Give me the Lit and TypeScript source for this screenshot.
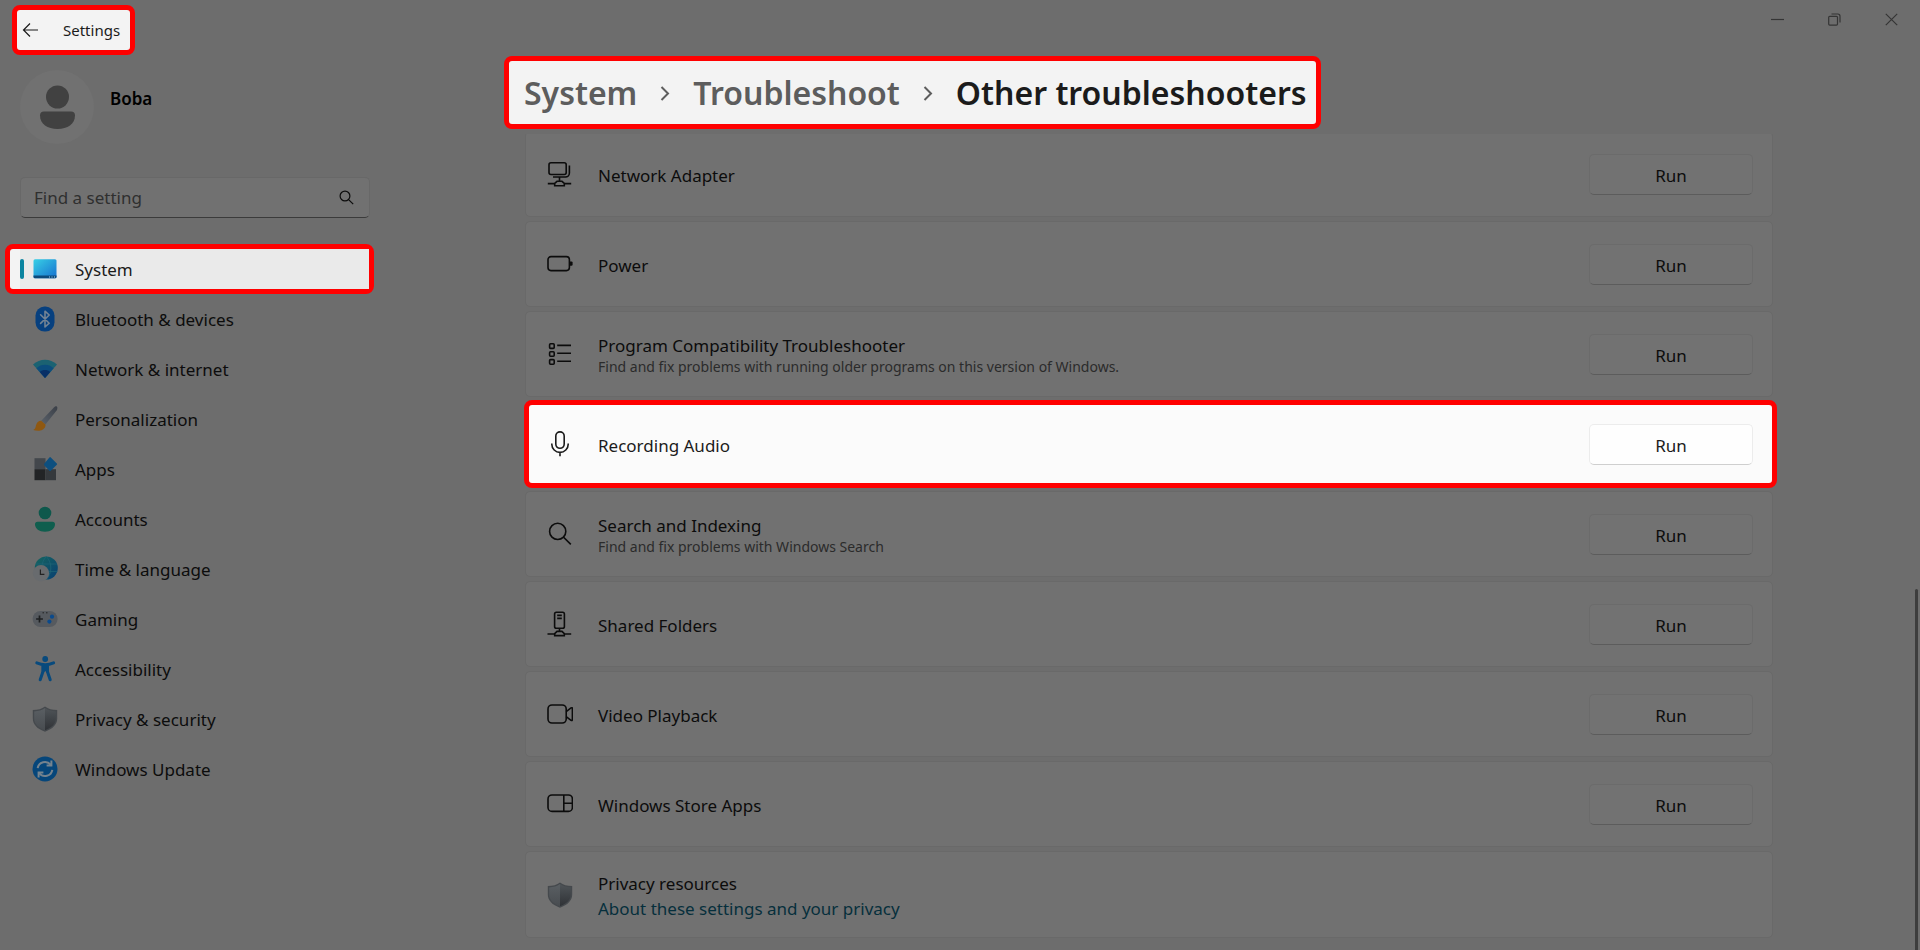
import { LitElement, html, svg, css, nothing } from "lit";
import { customElement, property } from "lit/decorators.js";
import { classMap } from "lit/directives/class-map.js";

const lineIcons = {
  network: svg`
    <rect x="2" y="1.7" width="17.2" height="11.8" rx="2"/>
    <path d="M22.4 4.6v7.4a4 4 0 0 1-4 4H6"/>
    <path d="M12.5 16v4.2M.8 22.6h6.6M17.6 22.6h6.6M10 20.3h5l2.3 2v2.4H7.7v-2.4z"/>`,
  power: svg`
    <rect x="1" y="5.6" width="21.4" height="14" rx="3"/>
    <path class="solid" d="M23 10.4h1.4a1.2 1.2 0 0 1 1.2 1.2v2a1.2 1.2 0 0 1-1.2 1.2H23z"/>`,
  list: svg`
    <rect x="2.6" y="2.8" width="4.6" height="4.6" rx="1"/>
    <rect x="2.6" y="10.7" width="4.6" height="4.6" rx="1"/>
    <rect x="2.6" y="18.6" width="4.6" height="4.6" rx="1"/>
    <path d="M10.2 4.4h13.8M10.2 12.3h13.8M10.2 20.2h13.8"/>`,
  mic: svg`
    <rect x="8.8" y=".9" width="8.4" height="16.4" rx="4.2"/>
    <path d="M4.8 12.6v.6a8.2 8.2 0 0 0 16.4 0v-.6M13 21.4v3.9"/>`,
  search: svg`
    <circle cx="10.7" cy="10.4" r="8.1"/>
    <path d="M16.6 16.3l7.2 7.1"/>`,
  server: svg`
    <rect x="7.6" y="1.2" width="9.8" height="16" rx="1.8"/>
    <path d="M10.2 4.4h4.6M10.2 7.4h4.6M12.5 17.2v3M.5 23h6.6M17.6 23h6.6M10 20.4h5l2.3 2.2v2H7.7v-2z"/>`,
  video: svg`
    <rect x="1" y="4" width="18.2" height="18" rx="4"/>
    <path d="M19.2 10.6l4.8-3.7q1.4-.7 1.4.8v10.8q0 1.5-1.4.8l-4.8-3.7"/>`,
  store: svg`
    <rect x="1" y="4" width="24.4" height="16.4" rx="4"/>
    <path d="M16.8 4v16.4M16.8 12.2h8.6"/>`,
};

const shield = svg`
  <linearGradient id="shL" x1="0" y1="0" x2="0" y2="1"><stop offset="0" stop-color="#5a5f63"/><stop offset="1" stop-color="#484c50"/></linearGradient>
  <linearGradient id="shR" x1="0" y1="0" x2="0" y2="1"><stop offset="0" stop-color="#4f5458"/><stop offset="1" stop-color="#2f3236"/></linearGradient>
  <path fill="#45494d" d="M13 .4c3.2 2.3 7 3.5 12.2 3.7v8.5c0 6-4.5 10.5-12.2 13.2C5.3 23.1.8 18.6.8 12.6V4.1C6 3.9 9.8 2.7 13 .4z"/>
  <path fill="url(#shL)" d="M13 1.9v22.4C6.2 21.8 2.2 17.9 2.2 12.6V5.4C6.6 5.1 10 4 13 1.9z"/>
  <path fill="url(#shR)" d="M13 1.9v22.4c6.8-2.5 10.8-6.4 10.8-11.7V5.4C19.4 5.1 16 4 13 1.9z"/>`;

const navIcons = {
  system: svg`
    <linearGradient id="sys" x1="0" y1="0" x2="1" y2="1"><stop offset="0" stop-color="#38d0e6"/><stop offset="1" stop-color="#1670cf"/></linearGradient>
    <rect x="1.5" y="3.2" width="23" height="19" rx="1.5" fill="url(#sys)"/>
    <path fill="#0c4a7c" d="M1.5 19.6h23v1.2a1.5 1.5 0 0 1-1.5 1.5H3a1.5 1.5 0 0 1-1.5-1.5z"/>
    <path stroke="#9fd0ee" stroke-width="1" stroke-dasharray="1 1.5" d="M17 21h6"/>`,
  bluetooth: svg`
    <rect x="3.5" y=".6" width="19" height="25" rx="9" fill="#07407f"/>
    <path fill="none" stroke="#748394" stroke-width="1.6" stroke-linejoin="round" stroke-linecap="round" d="M8.6 8.8l8.6 8.4L13 21V5.2l4.2 3.8-8.6 8.4"/>`,
  network: svg`
    <path fill="#1b6272" d="M1 8.6C7.8 2.2 18.2 2.2 25 8.6L13 22z"/>
    <path fill="#0c4d7d" d="M4.4 12.2c4.900-4.500 12.300-4.500 17.200 0L13 22z"/>
    <path fill="#082f66" d="M7.8 15.9c3-2.6 7.4-2.6 10.4 0L13 22z"/>`,
  brush: svg`
    <linearGradient id="br" x1="1" y1="0" x2="0" y2="1"><stop offset="0" stop-color="#3a3f47"/><stop offset="1" stop-color="#5b626b"/></linearGradient>
    <path fill="url(#br)" d="M24.8.6c1 .9.6 2.5-.2 3.8L13.4 18.6l-4.2-3.8L21.4 1.900C22.500.8 23.900-.1 24.800.6z"/>
    <path fill="#8f5811" d="M9.2 14.8l4.2 3.8c.6 2.6-2 5.5-5 6-2.3.4-5 .2-7.2-.6 2.6-1 2.3-3 3-5.2.8-2.5 2.8-4.1 5-4z"/>`,
  apps: svg`
    <rect x="2.5" y="2.2" width="11" height="11" fill="#43474c"/>
    <rect x="2.5" y="13.2" width="11" height="11" fill="#222426"/>
    <rect x="13.5" y="13.2" width="10.5" height="11" fill="#35393d"/>
    <path fill="#0d4f7f" d="M18.8 1.4l6 6a1 1 0 0 1 0 1.4l-6 6a1 1 0 0 1-1.4 0l-5-5.3a1.5 1.5 0 0 1 0-2l5-6.1a1 1 0 0 1 1.4 0z"/>`,
  accounts: svg`
    <circle cx="13" cy="7" r="6.3" fill="#0e584c"/>
    <path fill="#0f5e4e" d="M5.5 15.8h15a2.5 2.5 0 0 1 2.5 2.5c0 4.500-4.200 7.400-10 7.400S3 22.800 3 18.300a2.500 2.500 0 0 1 2.500-2.500z"/>`,
  time: svg`
    <linearGradient id="gl" x1="0" y1="0" x2="1" y2="1"><stop offset="0" stop-color="#16665f"/><stop offset="1" stop-color="#083f73"/></linearGradient>
    <circle cx="14.3" cy="12" r="11.5" fill="url(#gl)"/>
    <path fill="none" stroke="#1f6577" stroke-width=".7" d="M4 8h21M4 15.5h21.5M14.3.5c-6 6-6 17 0 23M14.3.5c6 6 6 17 0 23"/>
    <circle cx="9" cy="17.3" r="8.2" fill="#686b6e"/>
    <path fill="none" stroke="#222" stroke-width="1.2" d="M8.4 13.4v5h4"/>`,
  gaming: svg`
    <rect x=".6" y="5" width="25" height="16" rx="8" fill="#565a5f"/>
    <path fill="none" stroke="#1d1f21" stroke-width="1.7" d="M7.5 9.6v6.8M4.1 13h6.8"/>
    <path stroke="#222" stroke-width="1" d="M10.5 6.8h1.5M14 6.8h1.5"/>
    <circle cx="20" cy="10.7" r="2.1" fill="#0b4a8c"/><circle cx="17.4" cy="15.6" r="2.1" fill="#0b4a8c"/>`,
  accessibility: svg`
    <circle cx="13.2" cy="3" r="2.9" fill="#084a7d"/>
    <path fill="none" stroke="#084a7d" stroke-width="3" stroke-linecap="round" stroke-linejoin="round" d="M4.8 6.9c5.2 2.3 11.6 2.3 16.8 0M11 9v6.5L8.2 23.8M15.4 9v6.5l2.8 8.3"/>
    <path fill="#084a7d" d="M9.7 8h7v9h-1.6l-1.9-2-1.9 2H9.7z"/>`,
  shield,
  update: svg`
    <circle cx="13" cy="13" r="12.5" fill="#06467a"/>
    <path fill="none" stroke="#75838e" stroke-width="2" d="M5.7 12.2a7.3 7.3 0 0 1 13-3.4M20.3 13.8a7.3 7.3 0 0 1-13 3.4"/>
    <path fill="none" stroke="#75838e" stroke-width="2" d="M19.4 4.6v4.8h-4.8M6.6 21.4v-4.8h4.8"/>`,
};

type NavKey = keyof typeof navIcons;
const navItems: { icon: NavKey; label: string; active?: boolean }[] = [
  { icon: "system", label: "System", active: true },
  { icon: "bluetooth", label: "Bluetooth & devices" },
  { icon: "network", label: "Network & internet" },
  { icon: "brush", label: "Personalization" },
  { icon: "apps", label: "Apps" },
  { icon: "accounts", label: "Accounts" },
  { icon: "time", label: "Time & language" },
  { icon: "gaming", label: "Gaming" },
  { icon: "accessibility", label: "Accessibility" },
  { icon: "shield", label: "Privacy & security" },
  { icon: "update", label: "Windows Update" },
];

type LineKey = keyof typeof lineIcons;
const troubleshooters: { icon: LineKey; title: string; note?: string; lit?: boolean }[] = [
  { icon: "network", title: "Network Adapter" },
  { icon: "power", title: "Power" },
  {
    icon: "list",
    title: "Program Compatibility Troubleshooter",
    note: "Find and fix problems with running older programs on this version of Windows.",
  },
  { icon: "mic", title: "Recording Audio", lit: true },
  { icon: "search", title: "Search and Indexing", note: "Find and fix problems with Windows Search" },
  { icon: "server", title: "Shared Folders" },
  { icon: "video", title: "Video Playback" },
  { icon: "store", title: "Windows Store Apps" },
];

@customElement("troubleshooter-card")
class TroubleshooterCard extends LitElement {
  @property() icon: LineKey = "power";
  @property() heading = "";
  @property() note = "";
  @property({ type: Boolean, reflect: true }) lit = false;

  static styles = css`
    :host { display: block; }
    .card {
      box-sizing: border-box;
      min-height: 86px;
      display: flex;
      align-items: center;
      padding: 0 19px 0 21px;
      border: 1px solid #696969;
      border-radius: 5px;
      background: #717171;
      color: #0c0c0c;
    }
    .icon { width: 26px; height: 26px; flex: none; fill: none; stroke: currentColor; stroke-width: 1.6; }
    .solid { fill: currentColor; stroke: none; }
    .text { flex: 1; margin-left: 25px; padding-top: 4px; min-width: 0; }
    .title { font-size: 17px; line-height: 22px; }
    .note { font-size: 14px; line-height: 20px; color: #2b2b2b; }
    .run {
      box-sizing: border-box;
      width: 164px;
      height: 41px;
      border: 1px solid #6b6b6b;
      border-bottom-color: #5c5c5c;
      border-radius: 5px;
      background: #727272;
      color: inherit;
      font: inherit;
      font-size: 17px;
      padding: 2px 0 0;
    }
    .card.lit {
      position: relative;
      min-height: 88px;
      margin: -1px -4px -1px -1px;
      padding: 0 19px 0 18px;
      background: #fbfbfb;
      border: 5px solid #ff0000;
      border-radius: 8px;
      color: #1b1b1b;
    }
    .lit .run { background: #fefefe; border-color: #ececec; border-bottom-color: #cfcfcf; }
  `;

  render() {
    return html`<div class=${classMap({ card: true, lit: this.lit })}>
      <svg class="icon" viewBox="0 0 26 26" aria-hidden="true">${lineIcons[this.icon]}</svg>
      <div class="text">
        <div class="title">${this.heading}</div>
        ${this.note ? html`<div class="note">${this.note}</div>` : nothing}
      </div>
      <button class="run" aria-label="Run ${this.heading}">Run</button>
    </div>`;
  }
}

@customElement("app-root")
class AppRoot extends LitElement {
  static styles = css`
    :host {
      display: block;
      font-family: "Segoe UI Variable", "Segoe UI", "Noto Sans", sans-serif;
      font-size: 17px;
      color: #0c0c0c;
    }
    * { box-sizing: border-box; }
    a { color: inherit; text-decoration: none; }
    .window {
      height: 100vh;
      display: grid;
      grid-template-columns: 378px minmax(0, 1fr);
      background: #6d6d6d;
      overflow: hidden;
    }
    .spot { border: 5px solid #ff0000; border-radius: 8px; background: #f3f3f3; color: #1b1b1b; }

    .side { display: flex; flex-direction: column; padding: 5px 4px 0 5px; }
    .titlebar {
      align-self: flex-start;
      display: flex;
      align-items: center;
      gap: 24px;
      height: 50px;
      margin-left: 7px;
      padding: 0 10px 0 5px;
      font-size: 15px;
    }
    .back { display: flex; border: 0; padding: 0; background: none; color: inherit; }
    .thin { fill: none; stroke: currentColor; stroke-width: 1.2; }
    .profile { display: flex; gap: 16px; padding: 15px 15px 0; }
    .avatar { width: 74px; height: 74px; }
    .name { margin: 17px 0 0; font-size: 17px; line-height: 24px; font-weight: 600; color: #000; }
    .search {
      display: flex;
      align-items: center;
      height: 41px;
      margin: 33px 0 0 15px;
      width: 350px;
      padding: 0 15px 0 13px;
      border: 1px solid #686868;
      border-bottom-color: #3b3b3b;
      border-radius: 5px;
      background: #717171;
    }
    .field { flex: 1; min-width: 0; border: 0; padding: 0; outline: 0; background: none; font: inherit; color: inherit; }
    .field::placeholder { color: #2f2f2f; opacity: 1; }
    .nav { display: flex; flex-direction: column; margin-top: 26px; }
    .item { display: flex; align-items: center; height: 50px; padding-left: 27px; gap: 17px; }
    .label { padding-top: 1px; }
    .item.spot { padding-left: 5px; gap: 0; }
    .pill {
      flex: 1;
      display: flex;
      align-items: center;
      gap: 17px;
      align-self: stretch;
      margin-left: 5px;
      background: #eaeaea;
    }
    .bar { width: 4px; height: 20px; border-radius: 2px; background: #0b84a0; }
    .pill .glyph { margin-left: -9px; }
    .glyph { width: 26px; height: 26px; flex: none; }

    .main { position: relative; display: flex; flex-direction: column; min-width: 0; min-height: 0; }
    .caption { display: flex; justify-content: flex-end; color: #353535; }
    .cap { display: grid; place-items: center; width: 57px; height: 38px; border: 0; padding: 0; background: none; color: inherit; }
    .column { width: 100%; max-width: 1248px; margin: 0 auto; }
    .crumbs {
      display: flex;
      align-items: center;
      width: fit-content;
      height: 73px;
      margin: 18px 0 5px -21px;
      padding: 0 9px 0 15px;
      gap: 20px;
      font-size: 32px;
      font-weight: 600;
      white-space: nowrap;
      color: #5d5d5d;
    }
    .crumb { line-height: 44px; }
    .here { margin: 0; font: inherit; line-height: 44px; color: #1b1b1b; }
    .chev { width: 16px; height: 16px; fill: none; stroke: currentColor; stroke-width: 2; }
    .scroll { flex: 1; min-height: 0; overflow: hidden; }
    .list { display: flex; flex-direction: column; gap: 4px; margin-top: -3px; }
    .privacy {
      display: flex;
      align-items: center;
      min-height: 87px;
      padding: 0 21px;
      border: 1px solid #696969;
      border-radius: 5px;
      background: #717171;
    }
    .ptext { margin-left: 25px; padding-top: 2px; line-height: 25px; }
    .plink { color: #062f3c; }
    .thumb { position: absolute; right: 2px; top: 589px; bottom: 0; width: 3px; border-radius: 2px 2px 0 0; background: #3d3d3d; }
  `;

  private navItem(n: (typeof navItems)[number]) {
    const glyph = html`<svg class="glyph" viewBox="0 0 26 26" aria-hidden="true">${navIcons[n.icon]}</svg>`;
    return n.active
      ? html`<a class="item spot" href="#" aria-current="page"
          ><span class="pill"><span class="bar"></span>${glyph}<span class="label">${n.label}</span></span></a
        >`
      : html`<a class="item" href="#">${glyph}<span class="label">${n.label}</span></a>`;
  }

  render() {
    const chev = html`<svg class="chev" viewBox="0 0 16 16" aria-hidden="true"><path d="M4.500 2l6.500 6.500L4.500 15"/></svg>`;
    return html`<div class="window">
      <aside class="side">
        <div class="titlebar spot">
          <button class="back" aria-label="Back">
            <svg class="thin" width="17" height="16" viewBox="0 0 17 16"><path d="M16 8H1.500M8 1.500L1.500 8 8 14.500"/></svg>
          </button>
          <span>Settings</span>
        </div>
        <div class="profile">
          <svg class="avatar" viewBox="0 0 74 74" aria-hidden="true">
            <circle cx="37" cy="37" r="37" fill="#717171"/>
            <circle cx="37.5" cy="27" r="11.5" fill="#414141"/>
            <path fill="#414141" d="M24 41.500h27a4 4 0 0 1 4 4c0 8.500-7.500 13.500-17.500 13.500s-17.500-5-17.500-13.500a4 4 0 0 1 4-4z"/>
          </svg>
          <p class="name">Boba</p>
        </div>
        <label class="search">
          <input class="field" type="text" placeholder="Find a setting" aria-label="Find a setting" />
          <svg class="thin" width="15" height="15" viewBox="0 0 15 15" aria-hidden="true"><circle cx="6" cy="6" r="4.9"/><path d="M9.600 9.600l4.600 4.600"/></svg>
        </label>
        <nav class="nav">${navItems.map((n) => this.navItem(n))}</nav>
      </aside>
      <main class="main">
        <div class="caption">
          <button class="cap" aria-label="Minimize"><svg class="thin" width="13" height="13" viewBox="0 0 13 13"><path d="M0 6.500h13"/></svg></button>
          <button class="cap" aria-label="Restore"><svg class="thin" width="13" height="13" viewBox="0 0 13 13"><rect x=".7" y="3.3" width="8.8" height="8.8" rx="1"/><path d="M3.500 1h6.300a2.200 2.200 0 0 1 2.200 2.200v6.300"/></svg></button>
          <button class="cap" aria-label="Close"><svg class="thin" width="13" height="13" viewBox="0 0 13 13"><path d="M.8.8l11.400 11.400M12.200.8L.8 12.200"/></svg></button>
        </div>
        <div class="column">
          <div class="crumbs spot">
            <a class="crumb" href="#">System</a>${chev}
            <a class="crumb" href="#">Troubleshoot</a>${chev}
            <h1 class="here">Other troubleshooters</h1>
          </div>
        </div>
        <div class="scroll">
          <div class="column list">
            ${troubleshooters.map(
              (t) => html`<troubleshooter-card .icon=${t.icon} .heading=${t.title} .note=${t.note ?? ""} ?lit=${t.lit}></troubleshooter-card>`
            )}
            <div class="privacy">
              <svg class="glyph" viewBox="0 0 26 26" aria-hidden="true">${shield}</svg>
              <div class="ptext">
                <div>Privacy resources</div>
                <a class="plink" href="#">About these settings and your privacy</a>
              </div>
            </div>
          </div>
        </div>
        <div class="thumb"></div>
      </main>
    </div>`;
  }
}
